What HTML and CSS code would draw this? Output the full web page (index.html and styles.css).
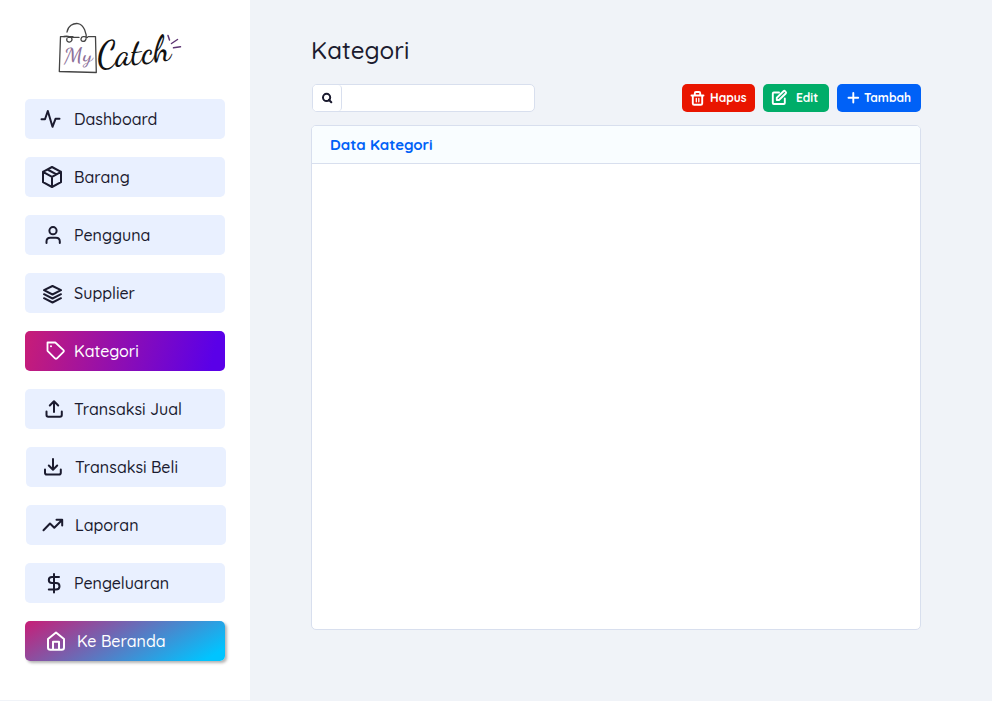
FILE: index.html
```html
<!DOCTYPE html>
<html lang="id">
<head>
<meta charset="utf-8">
<title>Kategori</title>
<link rel="stylesheet" href="styles.css">
</head>
<body>
<div class="app">
  <aside class="sidebar">
    <svg class="logo" viewBox="0 0 130 56" aria-label="My Catch">
      <g fill="none" stroke="#444" stroke-width="1.3" stroke-linecap="round" stroke-linejoin="round">
        <path d="M17 16.600H4.500L3.300 51.500 40.300 52.500 39.500 16.600H32M23 17.400H12"/>
        <path d="M11 12C12 6 17 3 22 3.600 28 4.500 31 14 30 19 29 22.500 24.500 22 25 18.800 25.500 16.500 28 16 31.500 17.500M8 16.500C12 15.500 16.500 17 16 20 14.500 23.500 9.500 22 11 18.500"/>
      </g>
      <text class="logo-my" x="8" y="43" textLength="29" lengthAdjust="spacingAndGlyphs" transform="rotate(-4 8 43)">My</text>
      <text class="logo-catch" x="42" y="47.500" textLength="74" lengthAdjust="spacingAndGlyphs" transform="rotate(-6 42 47.500)">Catch</text>
      <path d="M113.500 20 112 15.500M115.500 23.500 121.500 19.500M117.500 27.800 124.500 26.800" fill="none" stroke="#5d3573" stroke-width="1.500" stroke-linecap="round"/>
    </svg>
    <nav class="menu">
      <a class="item dashboard"><svg class="icon" viewBox="0 0 49 40"><path d="M16.500 20.300H20L22.800 12 27.500 27.800 30.500 19.800H34.500"/></svg><span>Dashboard</span></a>
      <a class="item barang"><svg class="icon" viewBox="0 0 49 40"><path d="M27 10 36 14.800V25.200L27 30 18 25.200V14.800ZM18 14.800 27 19.800 36 14.800M27 19.800V30M22.500 12.500 31.500 17.300"/></svg><span>Barang</span></a>
      <a class="item pengguna"><svg class="icon" viewBox="0 0 49 40"><circle cx="28" cy="15.700" r="3.600"/><path d="M21.500 28V26.500Q21.500 22.800 25.200 22.800H31Q34.800 22.800 34.800 26.500V28"/></svg><span>Pengguna</span></a>
      <a class="item supplier"><svg class="icon" viewBox="0 0 49 40"><path d="M27.500 13 36 17.200 27.500 21.500 19 17.200ZM19 21.200 27.500 25.500 36 21.200M19 25.200 27.500 29.500 36 25.200"/></svg><span>Supplier</span></a>
      <a class="item kategori active"><svg class="icon" viewBox="0 0 49 40"><path d="M22.500 11.500H30.300L38.500 19.200Q39.300 20 38.500 20.800L32 27.300Q31 28.300 30 27.300L22.500 19.800Z"/><circle class="dot" cx="26" cy="15.200" r="1"/></svg><span>Kategori</span></a>
      <a class="item jual"><svg class="icon" viewBox="0 0 49 40"><path d="M21.500 22.500V26Q21.500 27.800 23.300 27.800H35Q36.800 27.800 36.800 26V22.500M29 23V12.500M24.800 16.500 29 12.300 33.200 16.500"/></svg><span>Transaksi Jual</span></a>
      <a class="item beli shifted"><svg class="icon" viewBox="0 0 49 40"><path d="M19 22.500V25.700Q19 27.500 20.800 27.500H33Q34.800 27.500 34.800 25.700V22.500M27 12V22.500M22.800 18.500 27 22.700 31.200 18.500"/></svg><span>Transaksi Beli</span></a>
      <a class="item laporan shifted"><svg class="icon" viewBox="0 0 49 40"><path d="M17.500 25.300 24 18.500 28.300 22.800 35.800 15.200M30.500 14.800H36.200V20.500"/></svg><span>Laporan</span></a>
      <a class="item pengeluaran"><svg class="icon" viewBox="0 0 49 40"><path d="M29 11V29.500M34 14H27Q23.800 14 23.800 17 23.800 20 27 20H31Q34.500 20 34.500 23.300 34.500 26.500 31 26.500H23.800"/></svg><span>Pengeluaran</span></a>
      <a class="item beranda home"><svg class="icon" viewBox="0 0 49 40"><path d="M23 18 31 11.500 39 18V26.500Q39 28.800 36.800 28.800H25.200Q23 28.800 23 26.500ZM28 28.500V20.800H34V28.500"/></svg><span>Ke Beranda</span></a>
    </nav>
  </aside>
  <main class="content">
    <h1>Kategori</h1>
    <div class="toolbar">
      <div class="search">
        <button class="search-button" aria-label="Cari"><svg viewBox="0 0 12 12"><circle cx="5.600" cy="5.400" r="3.600"/><path d="M7.800 7.700 10.300 10.200"/></svg></button>
        <input type="text" aria-label="Cari kategori">
      </div>
      <div class="actions">
        <button class="btn delete"><svg viewBox="0 0 28 28"><path d="M9.500 11.500H21.500M10.800 11.500V19.500Q10.800 20.800 12.200 20.800H18.800Q20.200 20.800 20.200 19.500V11.500M12.800 11.300V9.200Q12.800 8 14 8H17Q18.200 8 18.200 9.200V11.300"/><path class="thin" d="M14.300 14.500V17.800M16.800 14.500V17.800"/></svg><span>Hapus</span></button>
        <button class="btn edit"><svg viewBox="0 0 33 28"><path d="M16 8.500H10.800Q9.800 8.500 9.800 9.500V19Q9.800 20 10.800 20H20.800Q21.800 20 21.800 19V14.500M13.800 16V13.800L20.500 7.200Q21.300 6.500 22 7.200L22.700 7.900Q23.500 8.700 22.700 9.500L16 16Z"/></svg><span>Edit</span></button>
        <button class="btn add"><svg viewBox="0 0 27 28"><path d="M16.300 9V18.500M11.500 13.800H21.200"/></svg><span>Tambah</span></button>
      </div>
    </div>
    <section class="card">
      <h2><span>Data Kategori</span></h2>
    </section>
  </main>
</div>
</body>
</html>
```
FILE: styles.css
```css
* { box-sizing: border-box; }
body { margin: 0; background: #f0f3f8; color: #1b1b2f; font-family: Quicksand, Lato, sans-serif; }
.app { display: flex; height: 701px; }
.sidebar { width: 250px; height: 700px; padding: 20px 24px 0 25px; background: #fff; flex: none; }
.logo { display: block; width: 130px; height: 56px; margin-left: 31px; }
.logo-my { font: 400 21px "Dancing Script", "Caveat", Quicksand, cursive; fill: #8d7199; }
.logo-catch { font: 500 37px "Dancing Script", "Caveat", cursive; fill: #111; }
.menu { display: flex; flex-direction: column; gap: 18px; margin-top: 23px; }
.item { display: flex; align-items: center; width: 200px; height: 40px; border-radius: 5px; background: #e9f0ff; font-size: 16px; font-weight: 500; line-height: 20px; white-space: nowrap; }
.icon { width: 49px; height: 40px; flex: none; }
svg { fill: none; stroke: currentColor; stroke-width: 2; stroke-linecap: round; stroke-linejoin: round; }
.logo text { stroke: none; }
.dot { fill: currentColor; stroke: none; }
.thin { stroke-width: 1.300; }
.shifted { margin-left: 1px; }
.active { color: #fff; background: linear-gradient(103deg, #c81d77, #5a00e8 93%); }
.active .icon { stroke-width: 1.800; }
.home { color: #fff; background: linear-gradient(150deg, #c81d77, #00c4ff 92%); box-shadow: 2px 2px 3px rgba(0, 0, 0, .3); }
.home span { margin-left: 3px; }
.content { width: 610px; margin-left: 61px; padding-top: 35px; }
h1 { margin: 0; font-size: 24px; line-height: 30px; font-weight: 500; letter-spacing: .15px; }
.toolbar { display: flex; justify-content: space-between; height: 28px; margin-top: 19px; }
.search { display: flex; width: 223px; margin-left: 1px; border: 1px solid #d8dfee; border-radius: 5px; background: #fff; overflow: hidden; }
.search-button { width: 29px; padding: 0; border: 0; border-right: 1px solid #d8dfee; border-radius: 0 4px 4px 0; background: #fff; color: #1b1b2f; display: grid; place-items: center; }
.search-button svg { width: 12px; height: 12px; stroke-width: 2; }
.search input { flex: 1; min-width: 0; border: 0; outline: 0; background: transparent; font: inherit; }
.actions { display: flex; gap: 8px; }
.btn { display: flex; align-items: center; height: 28px; padding: 0; border: 0; border-radius: 5px; color: #fff; font: bold 12px/16px Quicksand, Lato, sans-serif; }
.btn svg { height: 28px; flex: none; stroke-width: 1.900; }
.delete { width: 73px; background: #e91500; }
.delete svg { width: 28px; }
.edit { width: 66px; background: #00ad69; }
.edit svg { width: 33px; }
.add { width: 84px; background: #0061f7; }
.add svg { width: 27px; }
.card { height: 505px; margin-top: 13px; border: 1px solid #d8dfee; border-radius: 5px; background: #fff; overflow: hidden; }
h2 { display: flex; align-items: center; height: 38px; margin: 0; padding-left: 18px; border-bottom: 1px solid #d8dfee; background: #f9fdff; color: #0061f7; font-size: 15px; line-height: 20px; font-weight: 700; }
```
